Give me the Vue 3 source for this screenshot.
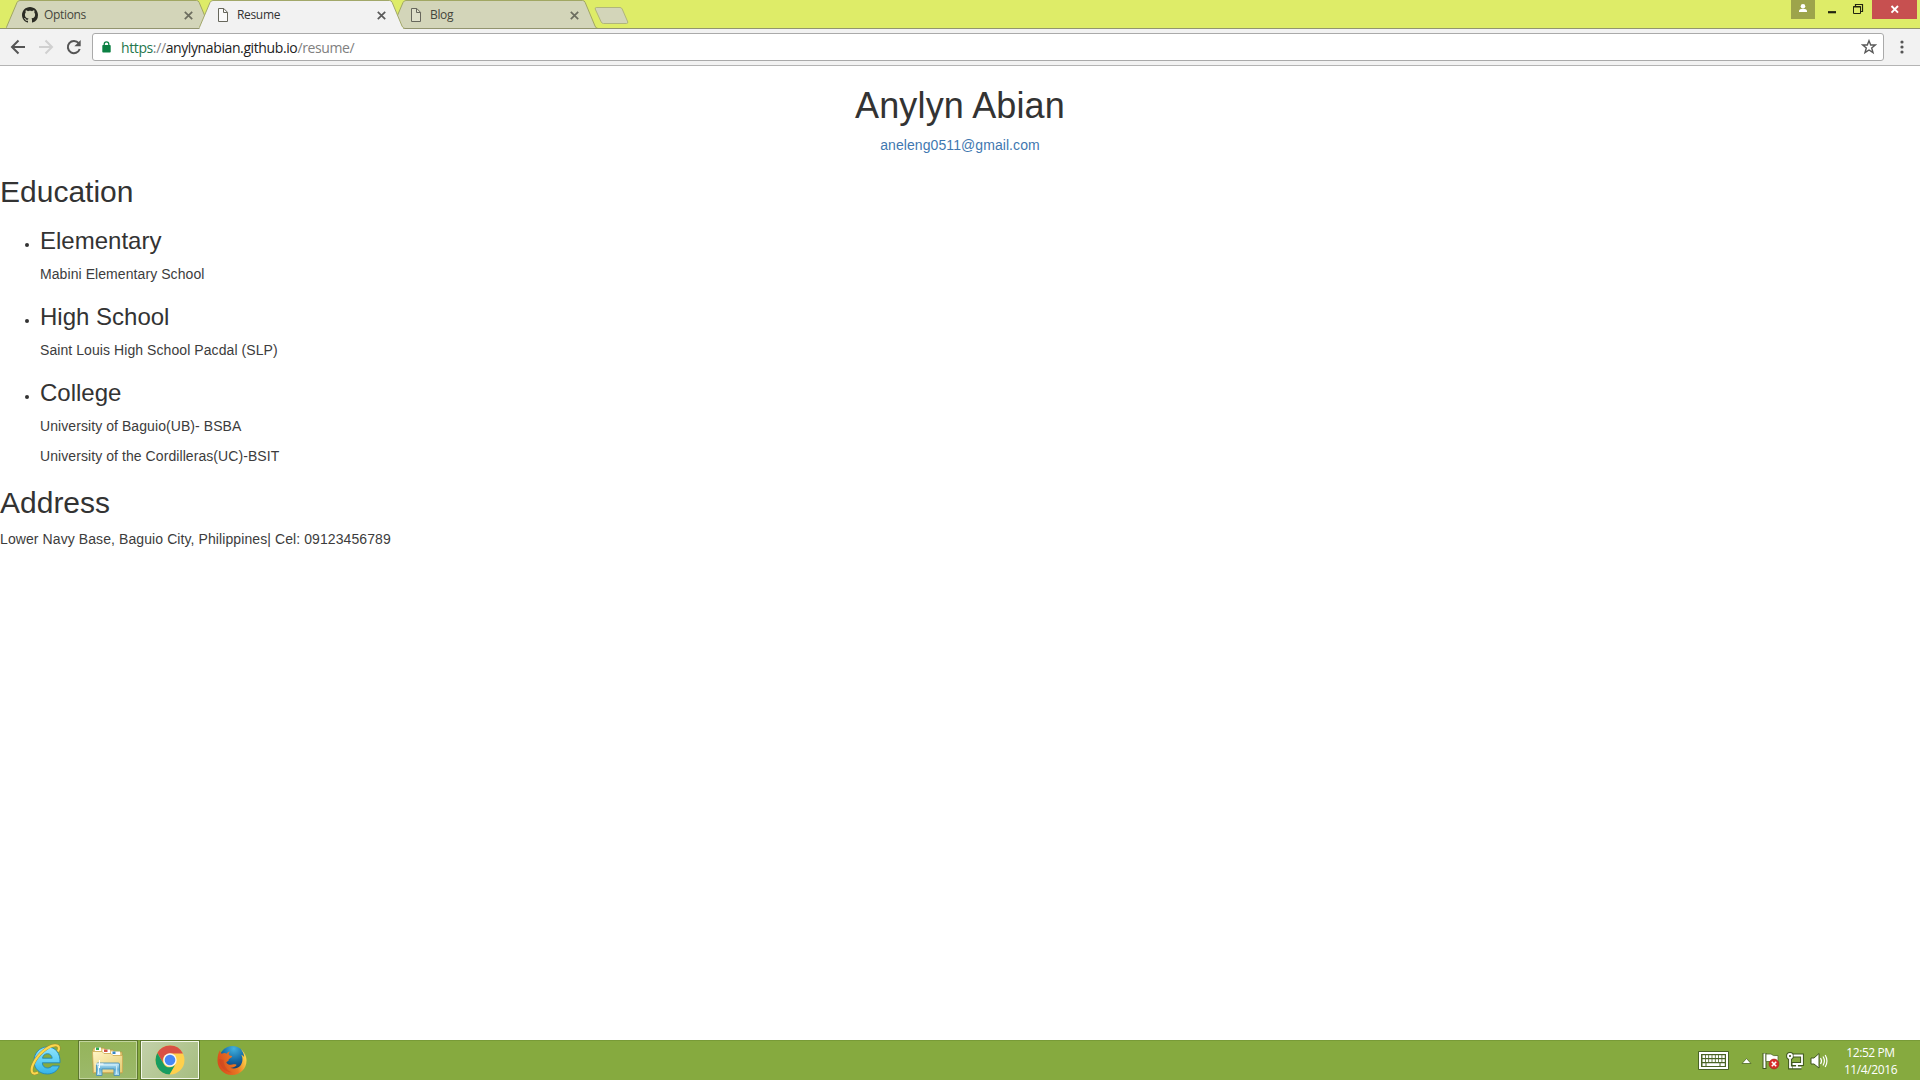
<script setup>
const tabs = [
  { title: 'Options', icon: 'github', active: false },
  { title: 'Resume', icon: 'doc', active: true },
  { title: 'Blog', icon: 'doc', active: false },
]
const schools = [
  { level: 'Elementary', lines: ['Mabini Elementary School'] },
  { level: 'High School', lines: ['Saint Louis High School Pacdal (SLP)'] },
  { level: 'College', lines: ['University of Baguio(UB)- BSBA', 'University of the Cordilleras(UC)-BSIT'] },
]
const keyRows = [[0, 1, 2, 3, 4, 5, 6], [0, 1, 2, 3, 4, 5, 6]]
</script>

<template>
  <div class="screen">
    <header class="strip">
      <div class="tabs">
        <div v-for="tab in tabs" :key="tab.title" class="tab" :class="{ active: tab.active }">
          <svg class="tab-shape" width="206" height="29" viewBox="0 0 206 29">
            <path d="M-.5 28.500 C.3 28 .6 27 1 26 L11 2.500 Q12 .5 14 .5 H190.500 Q192.500 .5 193.200 2.500 L203 26 Q204 28.500 206 28.500" :fill="tab.active ? '#f2f2f2' : '#d3d5b9'" :stroke="tab.active ? '#a2a86a' : '#a1a763'" />
            <path v-if="!tab.active" d="M0 28.500H206" stroke="#92946f" />
            <path v-else d="M1 28.500H204" stroke="#f2f2f2" stroke-width="2" />
          </svg>
          <svg v-if="tab.icon === 'github'" class="favicon" width="16" height="16" viewBox="0 0 16 16">
            <path fill="#2b2c24" d="M8 0C3.580 0 0 3.580 0 8c0 3.540 2.290 6.530 5.470 7.590.4.070.55-.17.55-.38 0-.19-.01-.82-.01-1.490-2.010.37-2.530-.49-2.690-.94-.09-.23-.48-.94-.82-1.130-.28-.15-.68-.52-.01-.53.63-.01 1.080.58 1.230.82.72 1.210 1.870.87 2.330.66.070-.52.28-.87.51-1.070-1.780-.2-3.640-.89-3.640-3.950 0-.87.31-1.590.82-2.150-.08-.2-.36-1.020.08-2.120 0 0 .67-.21 2.200.82.64-.18 1.320-.27 2-.27s1.360.09 2 .27c1.530-1.040 2.200-.82 2.200-.82.44 1.100.16 1.920.08 2.120.51.56.82 1.270.82 2.150 0 3.070-1.870 3.750-3.650 3.950.29.25.54.73.54 1.480 0 1.070-.01 1.930-.01 2.200 0 .21.15.46.55.38A8.010 8.010 0 0 0 16 8c0-4.420-3.580-8-8-8z" />
          </svg>
          <svg v-else class="favicon" width="16" height="16" viewBox="0 0 16 16">
            <path d="M3.500 1.500H8.800L12.500 5.300V14.500H3.500Z" :fill="tab.active ? '#fafafa' : '#dedfc9'" stroke="#67675c" />
            <path d="M8.500 1.500V5.500H12.500" fill="none" stroke="#67675c" />
          </svg>
          <span class="title">{{ tab.title }}</span>
          <svg class="close" width="9" height="9" viewBox="0 0 9 9"><path d="M.8 .8L8.200 8.200M8.200 .8L.8 8.200" :stroke="tab.active ? '#5a5a5a' : '#6c6d5f'" stroke-width="1.700" /></svg>
        </div>
        <svg class="newtab" width="36" height="18" viewBox="0 0 36 18"><path d="M2.200 .5H26Q27.500 .5 28.200 2L33.800 15Q34 16.500 32.500 16.500H9.500Q8 16.500 7.200 15L1.200 2Q1 .5 2.200 .5Z" fill="#d3d5b9" stroke="#b0b57c" /></svg>
      </div>
      <div class="window-controls">
        <svg width="129" height="19" viewBox="0 0 129 19">
          <path d="M0 0H24V19H0Z" fill="#9da44b" />
          <circle cx="12" cy="6.300" r="2.300" fill="#fff" />
          <path d="M8 12V10.800Q8.300 8.800 12 8.800T16 10.800V12Z" fill="#fff" />
          <path d="M37 12.200H45" stroke="#222510" stroke-width="2.200" />
          <path d="M62.500 6.500H69.500V13.500H62.500Z" fill="none" stroke="#222510" />
          <path d="M62 7H70M64.500 6V4.500H71.500V11.500H70" fill="none" stroke="#222510" stroke-width="1.200" />
          <path d="M81 0H126V19H81Z" fill="#c75050" />
          <path d="M100.500 6L107 12.700M107 6L100.500 12.700" stroke="#fff" stroke-width="1.900" />
        </svg>
      </div>
    </header>

    <nav class="toolbar">
      <svg class="nav-icons" width="92" height="36" viewBox="0 0 92 36">
        <path d="M25 18H12.500M18.500 11.500L12 18L18.500 24.500" fill="none" stroke="#555" stroke-width="2" />
        <path d="M39 18H51.500M45.500 11.500L52 18L45.500 24.500" fill="none" stroke="#d0d0d0" stroke-width="2" />
        <path d="M78.700 14.200A6.100 6.100 0 1 0 79.700 20" fill="none" stroke="#555" stroke-width="2" />
        <path d="M80.700 11V17.300H74.400Z" fill="#555" />
      </svg>
      <div class="omnibox">
        <svg class="lock" width="9" height="12" viewBox="0 0 9 12"><path d="M2.200 5V3.200a2.300 2.300 0 0 1 4.600 0V5" fill="none" stroke="#0b8043" stroke-width="1.300" /><rect x=".3" y="4" width="8.400" height="7.500" rx=".8" fill="#0b8043" /></svg>
        <span class="url"><span class="scheme">https</span><span class="dim">://</span>anylynabian.github.io<span class="dim">/resume/</span></span>
        <svg class="star" width="16" height="16" viewBox="0 0 16 16"><path d="M8 1.700L9.700 6H14.300L10.700 9L12 13.700L8 11L4 13.700L5.300 9L1.700 6H6.300Z" fill="none" stroke="#5a5a5a" stroke-width="1.400" /></svg>
      </div>
      <svg class="menu" width="6" height="16" viewBox="0 0 6 16"><g fill="#555"><circle cx="3" cy="3" r="1.600" /><circle cx="3" cy="8" r="1.600" /><circle cx="3" cy="13" r="1.600" /></g></svg>
    </nav>

    <main class="page">
      <div class="intro">
        <h1>Anylyn Abian</h1>
        <p><a>aneleng0511@gmail.com</a></p>
      </div>
      <h2>Education</h2>
      <ul>
        <li v-for="school in schools" :key="school.level">
          <h3>{{ school.level }}</h3>
          <p v-for="line in school.lines" :key="line">{{ line }}</p>
        </li>
      </ul>
      <h2>Address</h2>
      <p class="address">Lower Navy Base, Baguio City, Philippines| Cel: 09123456789</p>
    </main>

    <footer class="taskbar">
      <div class="apps">
        <div class="app ie">
          <svg width="34" height="34" viewBox="0 0 34 34">
            <defs><linearGradient id="ieBlue" x1="0" y1="0" x2="0" y2="1"><stop offset="0" stop-color="#8fe3fb" /><stop offset=".5" stop-color="#62d0f6" /><stop offset="1" stop-color="#35b3e8" /></linearGradient></defs>
            <path d="M31 19.800H13.300C13.500 23 15.500 25 18.400 25C20.500 25 22 24.200 23 22.900H30.300C28.500 28 24 31 18.300 31C10.500 31 5 25.500 5 18C5 10.200 10.600 4 18.300 4C26.500 4 31.500 10 31 19.800ZM13.500 15.200H23.200C22.800 12.300 21 10.700 18.400 10.700S14 12.300 13.500 15.200Z" fill="url(#ieBlue)" stroke="#2388b5" stroke-width=".9" />
            <path d="M29 8.500C31 4.500 30 1.800 25.500 2.300C19 3 9 11 4.500 20.500C1.300 27 2 33 9 29.500" fill="none" stroke="#a8862b" stroke-width="3" />
            <path d="M29 8.500C31 4.500 30 1.800 25.500 2.300C19 3 9 11 4.500 20.500C1.300 27 2 33 9 29.500" fill="none" stroke="#fbd84c" stroke-width="2.200" />
          </svg>
        </div>
        <div class="app explorer">
          <svg width="34" height="32" viewBox="0 0 34 32">
            <defs>
              <linearGradient id="folder" x1="0" y1="0" x2="1" y2="1"><stop offset="0" stop-color="#fff5c6" /><stop offset="1" stop-color="#e6cb71" /></linearGradient>
              <linearGradient id="stand" x1="0" y1="0" x2="0" y2="1"><stop offset="0" stop-color="#c7ebfa" /><stop offset=".5" stop-color="#62afd6" /><stop offset="1" stop-color="#b8e3f5" /></linearGradient>
            </defs>
            <path d="M3 3H13L15 5H22L24 7H31V28H2V4Z" fill="#e7cc7a" stroke="#b9984a" stroke-width=".7" />
            <path d="M4 2.500H10V6H4ZM11.500 4.500H19V8H11.500ZM20 6.500H29V10H20Z" fill="#fff" />
            <path d="M5 2.500H8V5H5Z" fill="#2faa4d" /><path d="M13 4.500H16.500V7H13Z" fill="#cf5142" /><path d="M21.500 6.500H24.500V9H21.500Z" fill="#3586c6" />
            <path d="M1.500 6.500H11L13 8.500H20L22 10.500H31.500V27.500H2.500Z" fill="url(#folder)" stroke="#caa850" stroke-width=".7" />
            <path d="M5.500 30.500V19Q5.500 18 7 18H27Q28.500 18 28.500 19V30.500H23V24H11V30.500Z" fill="url(#stand)" stroke="#4b91b5" stroke-width=".9" />
            <path d="M8 20H26.500M7.500 21V29M25.700 21V29" stroke="#d8f3fc" fill="none" />
            <path d="M8.500 15V23M4.500 19H12.500" stroke="#fff" stroke-width="1" />
          </svg>
        </div>
        <div class="app chrome">
          <svg width="30" height="30" viewBox="0 0 30 30">
            <circle cx="15" cy="15" r="14.500" fill="#ffd04c" />
            <path d="M15 8.500H28A14.500 14.500 0 0 0 2.300 8L8.300 18.200A7 7 0 0 1 15 8.500Z" fill="#d85144" />
            <path d="M2.300 8A14.500 14.500 0 0 0 14.500 29.500L21 18.500A7 7 0 0 1 8.500 18.400Z" fill="#179c61" />
            <circle cx="15" cy="15" r="6.700" fill="#f5f5f5" /><circle cx="15" cy="15" r="5.300" fill="#4788f4" />
          </svg>
        </div>
        <div class="app firefox">
          <svg width="30" height="31" viewBox="0 0 31 31">
            <defs>
              <radialGradient id="fxBlue" cx=".55" cy=".1" r=".75"><stop offset="0" stop-color="#42b1df" /><stop offset=".6" stop-color="#146ba7" /><stop offset="1" stop-color="#123f72" /></radialGradient>
              <linearGradient id="fxTail" x1="0" y1=".5" x2="1" y2=".2"><stop offset="0" stop-color="#d94b1c" /><stop offset=".55" stop-color="#e97923" /><stop offset="1" stop-color="#ffe44f" /></linearGradient>
            </defs>
            <circle cx="16" cy="14" r="13.500" fill="url(#fxBlue)" />
            <path d="M3 5C3.500 7 4 8 5 8.500C7 7.500 8.500 7.500 10 8.500C11 7 12.500 6.200 13.500 6.200C12.200 7.500 12 8.500 12.400 9.700C13.500 10.600 15 10.300 15.700 11C15.500 12.500 12.500 13 12 14.500C12.500 16.500 10 16.500 9.700 17.500C10.500 20 14.500 20.500 17 19.500C18.500 19 20 19.500 20.300 20.200C18.500 22.800 15 23.300 13 22.800C20 26 26.500 21.500 26.300 14C26.200 11.500 25.700 10.500 25 9.500C26.500 10 27.500 11 28 12C28 8.500 26 5.500 24.500 3.500C29 7 30.500 11.500 30.500 15.500C30.500 24 24 30.500 15.500 30.500S.5 24 .5 15.500C.5 11 1.500 7.500 3 5Z" fill="url(#fxTail)" />
            <path d="M2 14C3 22 7.500 27.500 15.500 28C10 25.500 7 21 6.800 15Z" fill="#c83d20" opacity=".4" />
          </svg>
        </div>
      </div>
      <div class="tray">
        <svg width="134" height="40" viewBox="0 0 134 40">
          <rect x="0" y="11" width="31" height="19" rx="1" fill="#3e571e" opacity=".85" />
          <rect x="2" y="13" width="27" height="15" fill="none" stroke="#fff" stroke-width="2" />
          <g fill="#fff">
            <template v-for="(row, r) in keyRows" :key="r"><rect v-for="k in row" :key="k" :x="4.500 + k * 3.300" :y="15.200 + r * 4" width="2.500" height="2.800" /></template>
            <path d="M4.500 23.200H7.500V26H4.500ZM8.500 23.200H21.500V26H8.500ZM22.500 23.200H26.800V26H22.500Z" />
          </g>
          <path d="M44 23.500L48.500 18.500L53 23.500Z" fill="#fff" stroke="#4d6723" stroke-width=".8" />
          <path d="M66.500 13V29" stroke="#40581f" stroke-width="4" /><path d="M66.500 13.500V28" stroke="#fff" stroke-width="2" />
          <path d="M68 14H73Q75 16.500 80 15.500V23Q75 23 72 21.500H68Z" fill="#fff" stroke="#526b2a" stroke-width=".8" />
          <circle cx="76" cy="24" r="4.900" fill="#d72e2a" stroke="#a52a22" stroke-width=".7" /><path d="M73.800 21.800L78.200 26.200M78.200 21.800L73.800 26.200" stroke="#fff" stroke-width="1.600" />
          <g fill="none" stroke="#40581f" stroke-width="3.800"><path d="M95 15.500H104V24H94V22M99 25V28M94 27.500H103.500M92 19V27.500H94" /><circle cx="92" cy="16" r="2" /></g>
          <g fill="none" stroke="#fff" stroke-width="1.800"><path d="M95.500 15.500H104V24H94.500M99 24V27M94.500 27.300H103.500M92 19V27.300H94" /><circle cx="92" cy="16" r="2" /></g>
          <path d="M113 18H116L121 13.500V28L116 24H113Z" fill="#fff" stroke="#40581f" />
          <path d="M122.500 18Q124.500 21 122.500 24M125 16.500Q127.800 21 125 25.500M127.200 15Q130.700 21 127.200 27" fill="none" stroke="#fff" stroke-width="1.200" />
        </svg>
        <div class="clock"><span>12:52 PM</span><span>11/4/2016</span></div>
      </div>
    </footer>
  </div>
</template>

<style>
body { margin: 0; overflow: hidden; background: #fff; }
</style>

<style scoped>
.screen { width: 1920px; height: 1080px; display: flex; flex-direction: column; overflow: hidden; background: #fff; }
svg { display: block; flex: none; }
.strip { height: 29px; flex: none; display: flex; justify-content: space-between; background: #deec68; box-shadow: inset 0 -1px #92946f; font: 12px "Open Sans", "Noto Sans", sans-serif; }
.tabs { display: flex; padding-left: 6px; }
.tab { position: relative; box-sizing: border-box; width: 206px; height: 29px; margin-right: -13px; padding: 1px 19px 0 16px; display: flex; align-items: center; color: #45463c; }
.tab.active { z-index: 2; color: #333; }
.tab-shape { position: absolute; inset: 0; fill: none; }
.favicon, .title, .close { position: relative; }
.title { flex: 1; margin-left: 6px; letter-spacing: -.33px; line-height: 16px; }
.newtab { margin: 7px 0 0 9px; }
.toolbar { height: 37px; box-sizing: border-box; flex: none; display: flex; align-items: center; background: #f2f2f2; border-bottom: 1px solid #b4b4b4; }
.omnibox { box-sizing: border-box; width: 1792px; height: 28px; border: 1px solid #aaa; border-radius: 3px; background: #fff; display: flex; align-items: center; padding: 0 6px 0 9px; font: 14px "Open Sans", "Noto Sans", sans-serif; color: #222; }
.url { flex: 1; margin-left: 10px; padding-top: 1px; letter-spacing: -.39px; line-height: 20px; }
.scheme { color: #25774c; }
.dim { color: #808080; }
.menu { margin-left: 15px; }
.page { flex: 1; font: 14px/20px "Liberation Sans", Arial, sans-serif; color: #333; }
h1, h2, h3 { font-weight: 400; margin: 20px 0 10px; }
h1 { font-size: 36px; line-height: 39px; letter-spacing: .15px; }
h2 { font-size: 30px; line-height: 33px; }
h3 { font-size: 24px; line-height: 26px; }
p { margin: 0 0 10px; letter-spacing: .075px; color: #3c3c3c; }
.address { letter-spacing: .09px; }
ul { margin: 0 0 10px; padding-left: 40px; }
.intro { text-align: center; }
.intro a { color: #3f78b0; }
.taskbar { height: 40px; flex: none; display: flex; justify-content: space-between; background: linear-gradient(#789b37 0 1px, #86aa3f 1px); }
.apps { display: flex; padding-left: 16px; }
.app { box-sizing: border-box; width: 60px; height: 40px; margin-right: 2px; display: flex; align-items: center; justify-content: center; }
.explorer, .chrome { border: 1px solid #5d772f; box-shadow: inset 0 0 0 1px #c2d49e; background: linear-gradient(#95b45a, #9cb96b); }
.explorer { padding-top: 2px; }
.chrome { background: linear-gradient(125deg, #c3d1aa, #a6bd7f); box-shadow: inset 0 0 0 1px #f3f7e8; }
.tray { display: flex; }
.clock { box-sizing: border-box; width: 88px; padding: 2px 11px 0 0; display: flex; flex-direction: column; justify-content: center; align-items: center; color: #fff; font: 12px/17px "Open Sans", "Noto Sans", sans-serif; letter-spacing: -.4px; }
</style>
